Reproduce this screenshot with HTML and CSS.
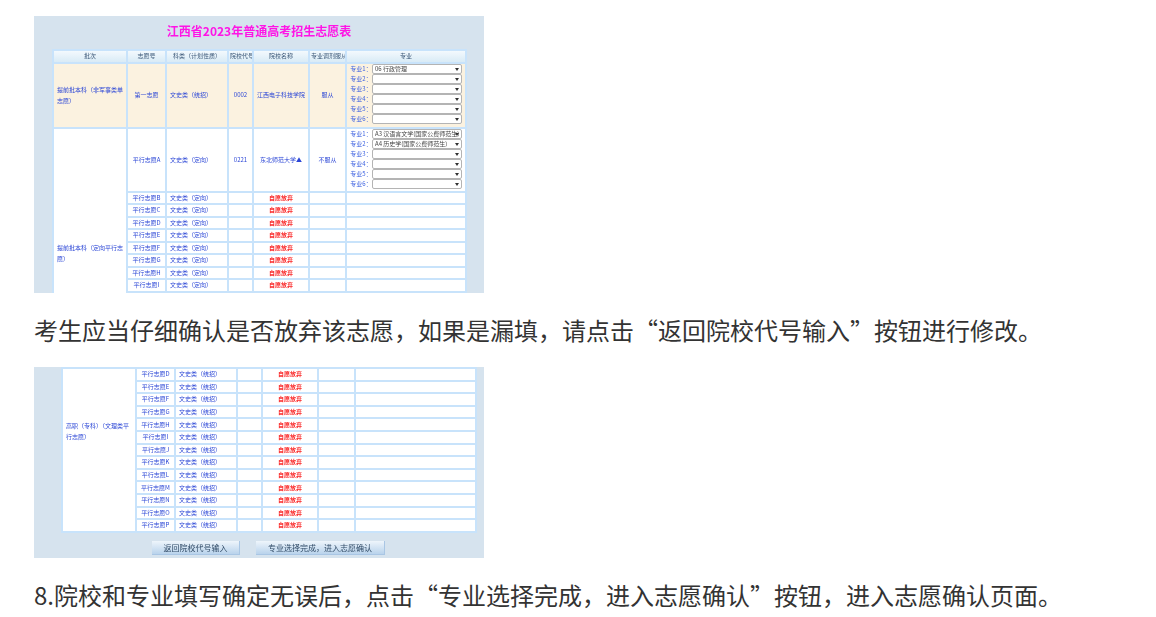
FILE: index.html
```html
<!DOCTYPE html>
<html lang="zh-CN">

<head>
    <meta charset="UTF-8">
    <meta name="viewport" content="width=device-width, initial-scale=1.0">
    <title>江西省2023年普通高考招生志愿表</title>
    <link rel="stylesheet" href="styles.css">
</head>

<body>
    <div class="article">
        <div class="shot shot-top">
            <div class="shot-inner">
                <h1 class="form-title">江西省2023年普通高考招生志愿表</h1>
                <table class="wish-table">
                    <colgroup>
                        <col class="c-batch"><col class="c-no"><col class="c-type"><col class="c-code"><col class="c-name"><col class="c-adjust"><col class="c-major">
                    </colgroup>
                    <thead>
                        <tr>
                            <th>批次</th><th>志愿号</th><th>科类（计划性质）</th><th>院校代号</th><th>院校名称</th><th>专业调剂服从</th><th>专业</th>
                        </tr>
                    </thead>
                    <tbody>
                        <tr class="row-first">
                            <td class="left batch">提前批本科（非军事类单志愿）</td>
                            <td>第一志愿</td>
                            <td class="left">文史类（统招）</td>
                            <td>0002</td>
                            <td>江西电子科技学院</td>
                            <td>服从</td>
                            <td class="majors">
                                <div class="major"><span>专业1：</span><div class="pick">06 行政管理</div></div>
                                <div class="major"><span>专业2：</span><div class="pick"></div></div>
                                <div class="major"><span>专业3：</span><div class="pick"></div></div>
                                <div class="major"><span>专业4：</span><div class="pick"></div></div>
                                <div class="major"><span>专业5：</span><div class="pick"></div></div>
                                <div class="major"><span>专业6：</span><div class="pick"></div></div>
                            </td>
                        </tr>
                        <tr class="row-tall">
                            <td class="left batch batch-parallel" rowspan="10">提前批本科（定向平行志愿）</td>
                            <td>平行志愿A</td>
                            <td class="left">文史类（定向）</td>
                            <td>0221</td>
                            <td>东北师范大学▲</td>
                            <td>不服从</td>
                            <td class="majors">
                                <div class="major"><span>专业1：</span><div class="pick">A3 汉语言文学(国家公费师范生)</div></div>
                                <div class="major"><span>专业2：</span><div class="pick">A4 历史学(国家公费师范生)</div></div>
                                <div class="major"><span>专业3：</span><div class="pick"></div></div>
                                <div class="major"><span>专业4：</span><div class="pick"></div></div>
                                <div class="major"><span>专业5：</span><div class="pick"></div></div>
                                <div class="major"><span>专业6：</span><div class="pick"></div></div>
                            </td>
                        </tr>
                        <tr><td>平行志愿B</td><td class="left">文史类（定向）</td><td></td><td class="gave-up">自愿放弃</td><td></td><td></td></tr>
                        <tr><td>平行志愿C</td><td class="left">文史类（定向）</td><td></td><td class="gave-up">自愿放弃</td><td></td><td></td></tr>
                        <tr><td>平行志愿D</td><td class="left">文史类（定向）</td><td></td><td class="gave-up">自愿放弃</td><td></td><td></td></tr>
                        <tr><td>平行志愿E</td><td class="left">文史类（定向）</td><td></td><td class="gave-up">自愿放弃</td><td></td><td></td></tr>
                        <tr><td>平行志愿F</td><td class="left">文史类（定向）</td><td></td><td class="gave-up">自愿放弃</td><td></td><td></td></tr>
                        <tr><td>平行志愿G</td><td class="left">文史类（定向）</td><td></td><td class="gave-up">自愿放弃</td><td></td><td></td></tr>
                        <tr><td>平行志愿H</td><td class="left">文史类（定向）</td><td></td><td class="gave-up">自愿放弃</td><td></td><td></td></tr>
                        <tr><td>平行志愿I</td><td class="left">文史类（定向）</td><td></td><td class="gave-up">自愿放弃</td><td></td><td></td></tr>
                        <tr><td>平行志愿J</td><td class="left">文史类（定向）</td><td></td><td class="gave-up">自愿放弃</td><td></td><td></td></tr>
                    </tbody>
                </table>
            </div>
        </div>

        <p class="step">考生应当仔细确认是否放弃该志愿，如果是漏填，请点击“返回院校代号输入”按钮进行修改。</p>

        <div class="shot shot-bottom">
            <div class="shot-inner">
                <table class="wish-table wish-table-lower">
                    <colgroup>
                        <col class="c-batch"><col class="c-no"><col class="c-type"><col class="c-code"><col class="c-name"><col class="c-adjust"><col class="c-major-lower">
                    </colgroup>
                    <tbody>
                        <tr><td class="left batch batch-lower" rowspan="13">高职（专科）（文理类平行志愿）</td><td>平行志愿D</td><td class="left">文史类（统招）</td><td></td><td class="gave-up">自愿放弃</td><td></td><td></td></tr>
                        <tr><td>平行志愿E</td><td class="left">文史类（统招）</td><td></td><td class="gave-up">自愿放弃</td><td></td><td></td></tr>
                        <tr><td>平行志愿F</td><td class="left">文史类（统招）</td><td></td><td class="gave-up">自愿放弃</td><td></td><td></td></tr>
                        <tr><td>平行志愿G</td><td class="left">文史类（统招）</td><td></td><td class="gave-up">自愿放弃</td><td></td><td></td></tr>
                        <tr><td>平行志愿H</td><td class="left">文史类（统招）</td><td></td><td class="gave-up">自愿放弃</td><td></td><td></td></tr>
                        <tr><td>平行志愿I</td><td class="left">文史类（统招）</td><td></td><td class="gave-up">自愿放弃</td><td></td><td></td></tr>
                        <tr><td>平行志愿J</td><td class="left">文史类（统招）</td><td></td><td class="gave-up">自愿放弃</td><td></td><td></td></tr>
                        <tr><td>平行志愿K</td><td class="left">文史类（统招）</td><td></td><td class="gave-up">自愿放弃</td><td></td><td></td></tr>
                        <tr><td>平行志愿L</td><td class="left">文史类（统招）</td><td></td><td class="gave-up">自愿放弃</td><td></td><td></td></tr>
                        <tr><td>平行志愿M</td><td class="left">文史类（统招）</td><td></td><td class="gave-up">自愿放弃</td><td></td><td></td></tr>
                        <tr><td>平行志愿N</td><td class="left">文史类（统招）</td><td></td><td class="gave-up">自愿放弃</td><td></td><td></td></tr>
                        <tr><td>平行志愿O</td><td class="left">文史类（统招）</td><td></td><td class="gave-up">自愿放弃</td><td></td><td></td></tr>
                        <tr><td>平行志愿P</td><td class="left">文史类（统招）</td><td></td><td class="gave-up">自愿放弃</td><td></td><td></td></tr>
                    </tbody>
                </table>
                <div class="actions">
                    <div class="action action-back">返回院校代号输入</div>
                    <div class="action action-next">专业选择完成，进入志愿确认</div>
                </div>
            </div>
        </div>

        <p class="step">8.院校和专业填写确定无误后，点击“专业选择完成，进入志愿确认”按钮，进入志愿确认页面。</p>
    </div>
</body>

</html>
```

FILE: styles.css
```css
html,
body {
    margin: 0;
    padding: 0;
    background-color: #fff;
    overflow: hidden;
}

body {
    font-family: "Noto Sans CJK SC", "Liberation Sans", sans-serif;
    color: #333;
}

.article {
    padding: 16px 34px 0;
}

.step {
    margin: 0;
    font-size: 24px;
    line-height: 36px;
    white-space: nowrap;
}

.shot + .step {
    padding: 19px 0 19px;
}

/* the two pictures in the article are blurry, scaled down screenshots */
.shot {
    width: 450px;
    background-color: #d6e3ee;
    overflow: hidden;
}

.shot-top {
    height: 277px;
}

.shot-bottom {
    height: 191px;
}

.shot-inner {
    filter: blur(0.7px);
}

.form-title {
    margin: 0;
    height: 33px;
    font-size: 12px;
    line-height: 29px;
    font-weight: 700;
    text-align: center;
    color: #ff14e6;
}

.wish-table {
    width: 413px;
    margin-left: 18px;
    border-collapse: collapse;
    table-layout: fixed;
    background-color: #fff;
    font-size: 6px;
    line-height: 8px;
    color: #2b46d6;
}

.wish-table-lower {
    width: 414px;
    margin-left: 27px;
}

.c-batch { width: 74px; }
.c-no { width: 39px; }
.c-type { width: 62px; }
.c-code { width: 25px; }
.c-name { width: 56px; }
.c-adjust { width: 37px; }
.c-major { width: 120px; }
.c-major-lower { width: 121px; }

.wish-table th,
.wish-table td {
    border: 2px solid #c8e3fb;
    padding: 0 1px;
    text-align: center;
    overflow: hidden;
    white-space: nowrap;
}

.wish-table th {
    height: 10.5px;
    font-weight: 400;
    color: #3c5878;
    background: linear-gradient(#f3f9fd, #d9ebf6);
}

.wish-table td {
    height: 10.5px;
}

.wish-table-lower td {
    height: 10.6px;
}

.wish-table td.left {
    padding-left: 3px;
    text-align: left;
}

.wish-table td.batch {
    padding-right: 1px;
    line-height: 11px;
    white-space: normal;
}

.wish-table td.batch-parallel {
    padding-top: 74px;
}

.wish-table td.batch-lower {
    padding-bottom: 38px;
}

.row-first td {
    height: 61px;
    background-color: #fbf2e0;
}

.row-tall td {
    height: 60px;
}

.wish-table td.gave-up {
    color: #fa2b2b;
    font-weight: 700;
}

.wish-table td.majors {
    padding: 0 3px 2px;
}

.major {
    display: flex;
    align-items: center;
    height: 10px;
    color: #3f63e0;
}

.major span {
    width: 22px;
    flex-shrink: 0;
}

.pick {
    position: relative;
    flex: 1;
    min-width: 0;
    height: 8px;
    padding: 0 8px 0 2px;
    line-height: 8px;
    text-align: left;
    color: #444;
    background-color: #fff;
    border: 1px solid #b4b4b4;
    border-radius: 2px;
    overflow: hidden;
}

/* little dropdown arrow of the select */
.pick::after {
    content: "";
    position: absolute;
    right: 2px;
    top: 3px;
    border-left: 2.5px solid transparent;
    border-right: 2.5px solid transparent;
    border-top: 3px solid #333;
}

.actions {
    display: flex;
    margin-left: 118px;
    margin-top: 8px;
    gap: 16px;
}

.action {
    height: 13px;
    font-size: 8px;
    line-height: 13px;
    text-align: center;
    color: #2f4a66;
    background: linear-gradient(#eef5fb, #b9d3ec);
    border-right: 1px solid #a9c6e4;
    border-bottom: 1px solid #a9c6e4;
}

.action-back {
    width: 87px;
}

.action-next {
    width: 128px;
}
```
